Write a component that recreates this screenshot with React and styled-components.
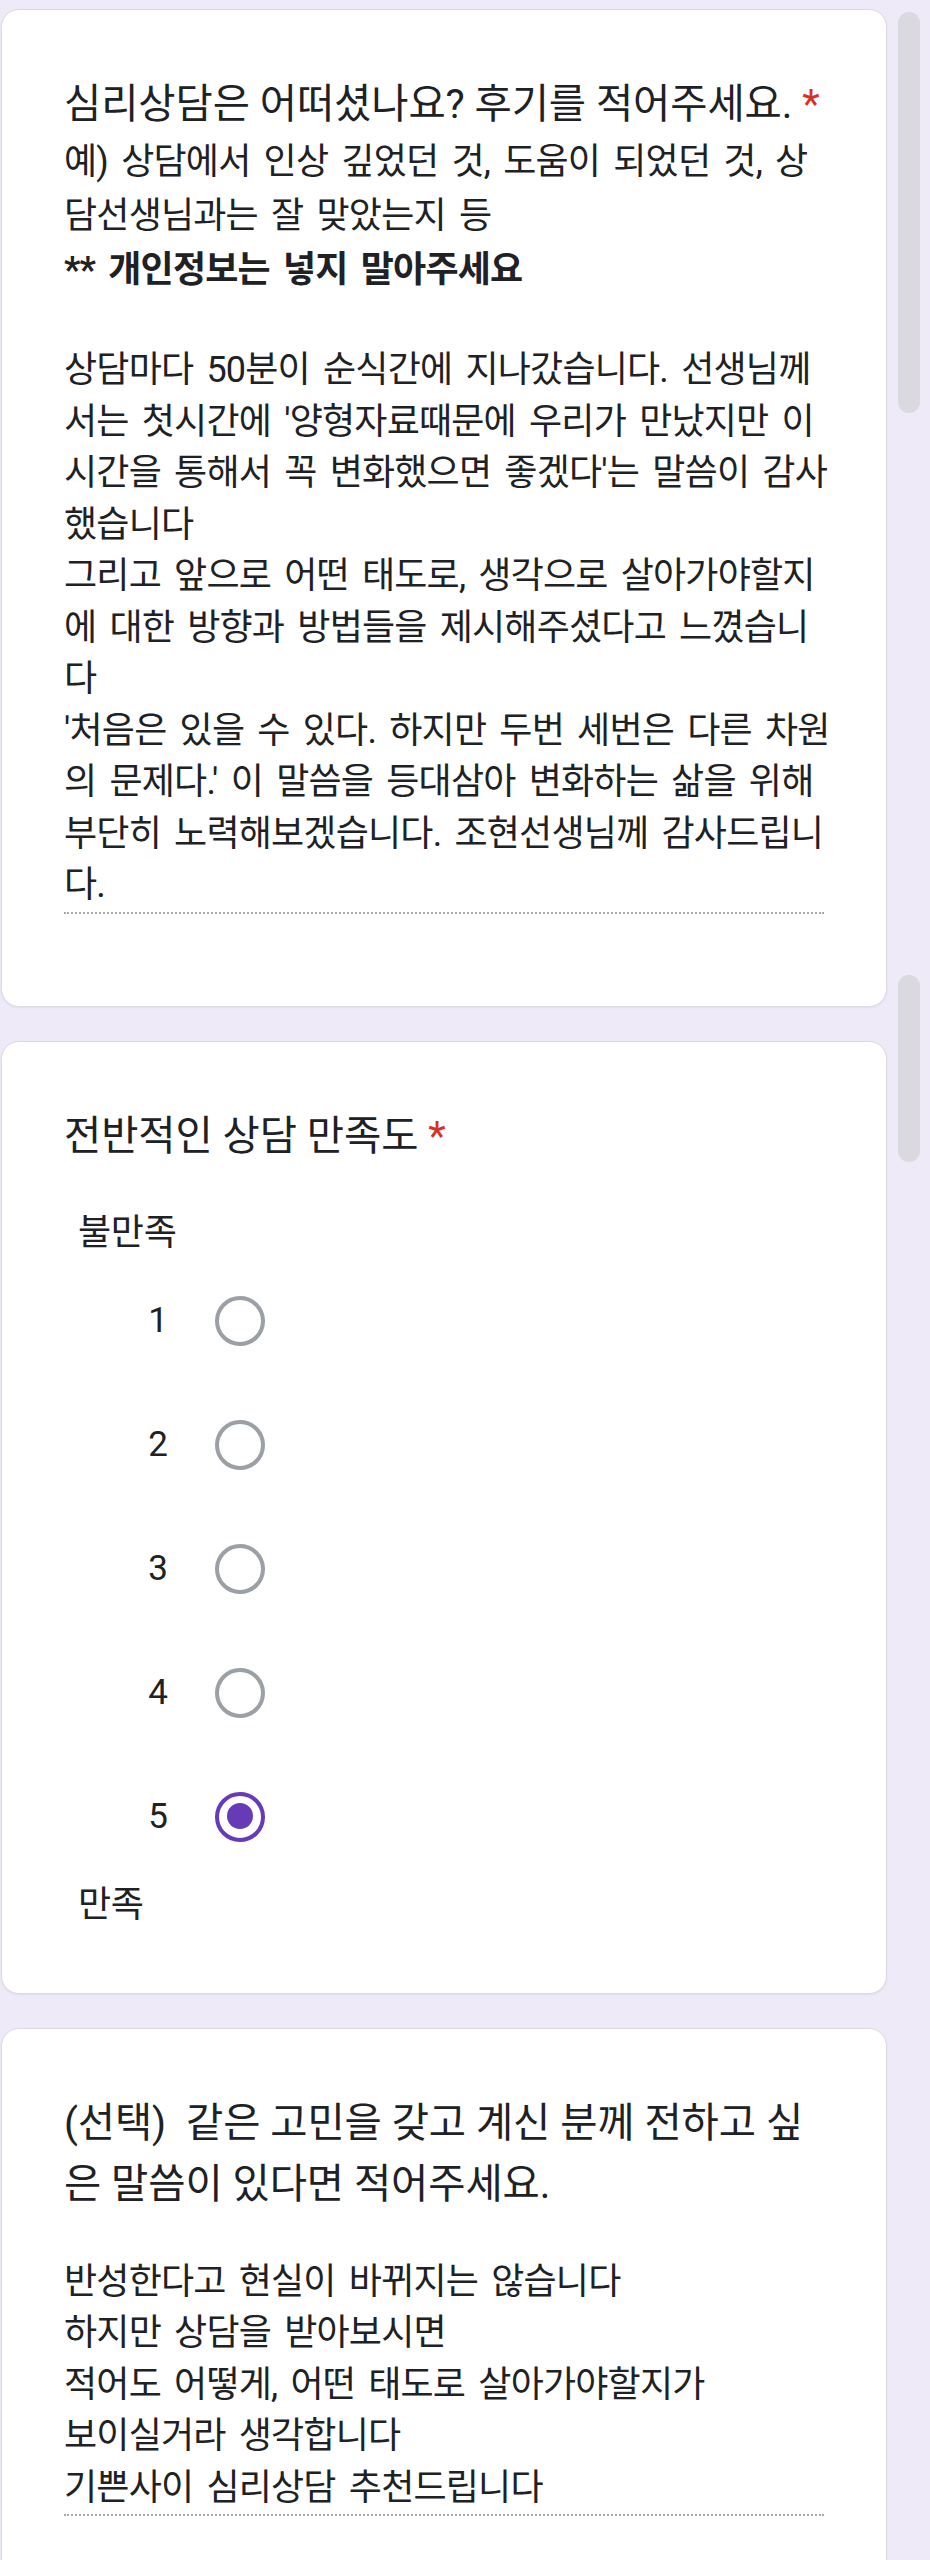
import React from 'react';
import styled, { createGlobalStyle } from 'styled-components';

const GlobalStyle = createGlobalStyle`
    body {
        margin: 0;
        background: #eeeaf7;
        font-family: "Roboto", "Noto Sans CJK KR", sans-serif;
        color: #202124;
    }
`;

// 응답 본문
const reviewText = `상담마다 50분이 순식간에 지나갔습니다. 선생님께
서는 첫시간에 '양형자료때문에 우리가 만났지만 이
시간을 통해서 꼭 변화했으면 좋겠다'는 말씀이 감사
했습니다
그리고 앞으로 어떤 태도로, 생각으로 살아가야할지
에 대한 방향과 방법들을 제시해주셨다고 느꼈습니
다
'처음은 있을 수 있다. 하지만 두번 세번은 다른 차원
의 문제다.' 이 말씀을 등대삼아 변화하는 삶을 위해
부단히 노력해보겠습니다. 조현선생님께 감사드립니
다.`;

const adviceText = `반성한다고 현실이 바뀌지는 않습니다
하지만 상담을 받아보시면
적어도 어떻게, 어떤 태도로 살아가야할지가
보이실거라 생각합니다
기쁜사이 심리상담 추천드립니다`;

const scale = [1, 2, 3, 4, 5];

function App() {
    const selected = 5;

    return (
        <>
            <GlobalStyle />
            <Page>
                <Column>
                    <Card>
                        <Title>
                            심리상담은 어떠셨나요? 후기를 적어주세요. <Required>*</Required>
                        </Title>
                        <Help>
                            예) 상담에서 인상 깊었던 것, 도움이 되었던 것, 상{'\n'}담선생님과는 잘 맞았는지 등
                            <Strong>** 개인정보는 넣지 말아주세요</Strong>
                        </Help>
                        <Answer $gap={48}>{reviewText}</Answer>
                        <Spacer $h={92} />
                    </Card>

                    <Card>
                        <Title>
                            전반적인 상담 만족도 <Required>*</Required>
                        </Title>
                        <ScaleLabel $top={40}>불만족</ScaleLabel>
                        {scale.map((n) => (
                            <Option key={n}>
                                <Num>{n}</Num>
                                <Radio $checked={n === selected} />
                            </Option>
                        ))}
                        <ScaleLabel $top={0}>만족</ScaleLabel>
                        <Spacer $h={62} />
                    </Card>

                    <Card>
                        <Title>{'(선택)  같은 고민을 갖고 계신 분께 전하고 싶\n은 말씀이 있다면 적어주세요.'}</Title>
                        <Answer $gap={42}>{adviceText}</Answer>
                        <Spacer $h={92} />
                    </Card>
                </Column>

                <Rail>
                    <Thumb $top={12} $h={401} />
                    <Thumb $top={562} $h={187} />
                </Rail>
            </Page>
        </>
    );
}

const Page = styled.div`
    display: flex;
    align-items: flex-start;
    height: 2560px;
    overflow: hidden;
`;

const Column = styled.div`
    width: 886px;
    margin-left: 1px;
    padding-top: 9px;
    display: flex;
    flex-direction: column;
    gap: 34px;
`;

const Card = styled.div`
    background: #fff;
    border: 1px solid #dcdae2;
    border-radius: 18px;
    box-shadow: 0 1px 2px rgba(60, 50, 90, 0.08);
    padding: 64px 62px 0 62px;
    display: flex;
    flex-direction: column;
`;

const Title = styled.div`
    font-size: 40.5px;
    line-height: 61px;
    letter-spacing: -0.1px;
    white-space: pre;
`;

const Required = styled.span`
    color: #d93025;
`;

const Help = styled.div`
    font-size: 36px;
    line-height: 54px;
    letter-spacing: -0.8px;
    word-spacing: 5px;
    white-space: pre;
`;

const Strong = styled.div`
    font-weight: 700;
`;

const Answer = styled.div`
    margin-top: ${(p) => p.$gap}px;
    width: 760px;
    font-size: 36px;
    line-height: 51.5px;
    letter-spacing: -0.8px;
    word-spacing: 5px;
    white-space: pre;
    border-bottom: 2px dotted #a9a9ad;
`;

const Spacer = styled.div`
    height: ${(p) => p.$h}px;
`;

const ScaleLabel = styled.div`
    margin-top: ${(p) => p.$top}px;
    padding-left: 14px;
    font-size: 36px;
    line-height: 52px;
    letter-spacing: -0.3px;
`;

const Option = styled.div`
    display: flex;
    align-items: center;
    height: 124px;
    padding-left: 64px;
`;

const Num = styled.span`
    width: 40px;
    text-align: right;
    font-size: 35px;
    margin-right: 47px;
`;

const Radio = styled.span`
    position: relative;
    width: 50px;
    height: 50px;
    box-sizing: border-box;
    border-radius: 50%;
    border: 4.5px solid ${(p) => (p.$checked ? '#673ab7' : '#9aa0a6')};

    &::after {
        content: '';
        display: ${(p) => (p.$checked ? 'block' : 'none')};
        position: absolute;
        left: 7.5px;
        top: 7.5px;
        width: 26px;
        height: 26px;
        border-radius: 50%;
        background: #673ab7;
    }
`;

const Rail = styled.div`
    margin-left: 11px;
    width: 22px;
    display: flex;
    flex-direction: column;
`;

const Thumb = styled.div`
    margin-top: ${(p) => p.$top}px;
    height: ${(p) => p.$h}px;
    border-radius: 11px;
    background: #dad9e0;
`;

export default App;
